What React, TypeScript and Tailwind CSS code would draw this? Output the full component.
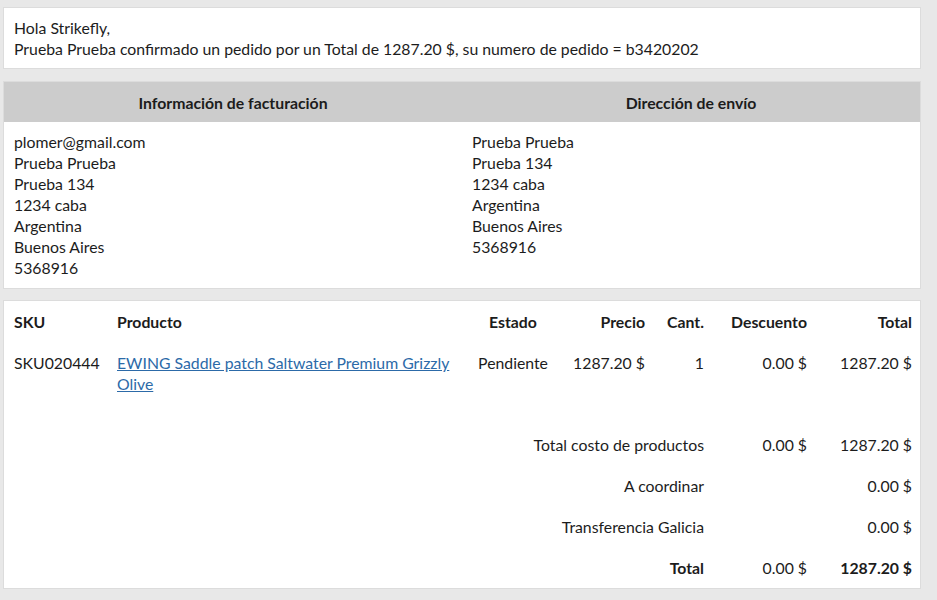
const cell = 'flex items-center';

export default function App() {
  return (
    <div
      className="min-h-screen bg-[#e8e8e8] pl-[3px] pr-[16px] pt-[7px] pb-[12px] text-[15.8px] leading-[21px] text-[#1c1c1c]"
      style={{ fontFamily: 'Lato, "Liberation Sans", sans-serif' }}
    >
      {/* saludo */}
      <div className="border border-[#dcdcdc] bg-white px-[10px] py-[9px]">
        <p>Hola Strikefly,</p>
        <p>Prueba Prueba confirmado un pedido por un Total de 1287.20 $, su numero de pedido = b3420202</p>
      </div>

      {/* facturación / envío */}
      <div className="mt-[12px] border border-[#dcdcdc] bg-white">
        <div className="grid h-[40px] grid-cols-2 items-center bg-[#cccccc] font-bold">
          <div className="text-center">Información de facturación</div>
          <div className="text-center">Dirección de envío</div>
        </div>
        <div className="grid grid-cols-2 pt-[9px] pb-[10px]">
          <div className="px-[10px]">
            <p>plomer@gmail.com</p>
            <p>Prueba Prueba</p>
            <p>Prueba 134</p>
            <p>1234 caba</p>
            <p>Argentina</p>
            <p>Buenos Aires</p>
            <p>5368916</p>
          </div>
          <div className="px-[10px]">
            <p>Prueba Prueba</p>
            <p>Prueba 134</p>
            <p>1234 caba</p>
            <p>Argentina</p>
            <p>Buenos Aires</p>
            <p>5368916</p>
          </div>
        </div>
      </div>

      {/* productos */}
      <div className="mt-[11px] border border-[#dcdcdc] bg-white px-[10px]">
        <div className="grid grid-cols-[103px_351px_90px_87px_59px_103px_105px]">
          <div className={`${cell} h-[41px] font-bold`}>SKU</div>
          <div className={`${cell} h-[41px] font-bold`}>Producto</div>
          <div className={`${cell} h-[41px] justify-center font-bold`}>Estado</div>
          <div className={`${cell} h-[41px] justify-end font-bold`}>Precio</div>
          <div className={`${cell} h-[41px] justify-end font-bold`}>Cant.</div>
          <div className={`${cell} h-[41px] justify-end font-bold`}>Descuento</div>
          <div className={`${cell} h-[41px] justify-end font-bold`}>Total</div>

          <div className="pt-[10px] pb-[30px]">SKU020444</div>
          <div className="pt-[10px] pb-[30px] pr-[10px]">
            <a href="#" className="text-[#2c6aa8] underline">
              EWING Saddle patch Saltwater Premium Grizzly Olive
            </a>
          </div>
          <div className="pt-[10px] text-center">Pendiente</div>
          <div className="pt-[10px] text-right">1287.20 $</div>
          <div className="pt-[10px] text-right">1</div>
          <div className="pt-[10px] text-right">0.00 $</div>
          <div className="pt-[10px] text-right">1287.20 $</div>

          <SummaryRow label="Total costo de productos" discount="0.00 $" total="1287.20 $" />
          <SummaryRow label="A coordinar" discount="" total="0.00 $" />
          <SummaryRow label="Transferencia Galicia" discount="" total="0.00 $" />
          <SummaryRow label="Total" discount="0.00 $" total="1287.20 $" bold />
        </div>
      </div>
    </div>
  );
}

function SummaryRow({
  label,
  discount,
  total,
  bold,
}: {
  label: string;
  discount: string;
  total: string;
  bold?: boolean;
}) {
  return (
    <>
      <div className={`col-span-5 flex h-[41px] items-center justify-end ${bold ? 'font-bold' : ''}`}>{label}</div>
      <div className="flex h-[41px] items-center justify-end">{discount}</div>
      <div className={`flex h-[41px] items-center justify-end ${bold ? 'font-bold' : ''}`}>{total}</div>
    </>
  );
}
